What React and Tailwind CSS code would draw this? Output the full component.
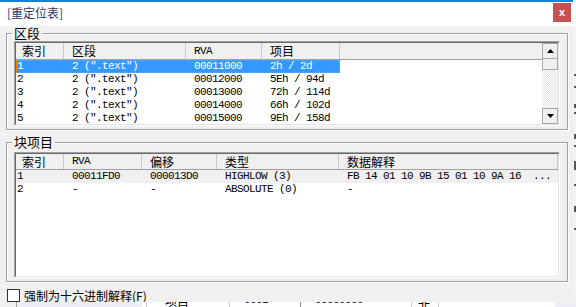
import React from "react";

const cjk = "font-['Noto_Sans_CJK_SC',sans-serif]";
const mono = "font-['Liberation_Mono',monospace] text-[11px] tracking-[-0.6px]";

const sections = [
  ["1", '2 (".text")', "00011000", "2h / 2d"],
  ["2", '2 (".text")', "00012000", "5Eh / 94d"],
  ["3", '2 (".text")', "00013000", "72h / 114d"],
  ["4", '2 (".text")', "00014000", "66h / 102d"],
  ["5", '2 (".text")', "00015000", "9Eh / 158d"],
];

const blocks = [
  ["1", "00011FD0", "000013D0", "HIGHLOW (3)", "FB 14 01 10 9B 15 01 10 9A 16  ..."],
  ["2", "-", "-", "ABSOLUTE (0)", "-"],
];

const secCols = ["w-[48px]", "w-[122px]", "w-[76px]", "w-[78px]"];
const blkCols = ["w-[48px]", "w-[78px]", "w-[75px]", "w-[122px]", "flex-1"];

// classic sunken listview frame
const Sunken = ({ className, children }) => (
  <div className={`border border-t-[#a0a0a0] border-l-[#a0a0a0] border-r-white border-b-white ${className}`}>
    <div className="h-full flex overflow-hidden bg-white border border-t-[#696969] border-l-[#696969] border-r-[#e3e3e3] border-b-[#e3e3e3]">
      {children}
    </div>
  </div>
);

const Head = ({ w, first, isMono, children }) => (
  <div
    className={`${w} shrink-0 h-full flex items-center border-r border-r-[#c8c8c8] whitespace-nowrap ${
      first ? "pl-[6px]" : "pl-[8px]"
    } ${isMono ? mono : `${cjk} text-[12px]`}`}
  >
    {children}
  </div>
);

const Cell = ({ w, first, children }) => (
  <div className={`${w} shrink-0 whitespace-pre overflow-hidden ${first ? "pl-[1px]" : "pl-[8px]"}`}>{children}</div>
);

const Group = ({ label, className, children }) => (
  <fieldset
    className={`w-[562px] border border-[#a0a0a0] px-[7px] shadow-[inset_1px_1px_0_#fff,1px_1px_0_#fff] ${className}`}
  >
    <legend className={`-ml-[2px] px-[2px] bg-[#f0f0f0] text-[13px] leading-[14px] ${cjk}`}>{label}</legend>
    {children}
  </fieldset>
);

const Arrow = ({ down }) => (
  <svg width="7" height="4" viewBox="0 0 7 4">
    <polygon points={down ? "0,0 7,0 3.5,4" : "0,4 7,4 3.5,0"} fill="#000" />
  </svg>
);

const marks = [
  ["mt-[48px]", "h-[2px]"],
  ["mt-[10px]", "h-[2px]"],
  ["mt-[16px]", "h-[4px]"],
  ["mt-[4px]", "h-[2px]"],
  ["mt-[20px]", "h-[5px]"],
  ["mt-[6px]", "h-[2px]"],
  ["mt-[14px]", "h-[9px]"],
  ["mt-[14px]", "h-[2px]"],
  ["mt-[20px]", "h-[6px]"],
  ["mt-[16px]", "h-[2px]"],
];

export default function App() {
  return (
    <div className="w-[576px] h-[307px] overflow-hidden bg-white flex flex-col text-black">
      <div className="flex h-[302px] shrink-0">
        <div className="w-[573px] flex flex-col bg-[#f0f0f0]">
          {/* title bar */}
          <div className="h-[26px] shrink-0 bg-white border-t-2 border-[#1783d6] flex items-start justify-between">
            <div className={`pl-[7px] pt-[3px] text-[12px] leading-[16px] text-[#1f3766] ${cjk}`}>[重定位表]</div>
            <div className="mt-[1px] mr-[2px] w-[18px] h-[19px] bg-[#c75050] text-white flex items-center justify-center text-[11px] font-bold font-['Liberation_Sans',sans-serif]">
              x
            </div>
          </div>

          <div className="flex-1 flex flex-col pl-[6px]">
            <Group label="区段" className="pt-[1px] pb-[3px]">
              <Sunken className="h-[85px]">
                <div className="flex-1 flex flex-col min-w-0">
                  <div className="h-[17px] shrink-0 flex bg-[#f0f0f0] border-b border-[#a0a0a0]">
                    <Head w={secCols[0]} first>索引</Head>
                    <Head w={secCols[1]}>区段</Head>
                    <Head w={secCols[2]} isMono>RVA</Head>
                    <Head w={secCols[3]}>项目</Head>
                    <div className="flex-1" />
                  </div>
                  {sections.map((r, i) => (
                    <div key={i} className={`h-[13px] leading-[13px] shrink-0 flex ${mono}`}>
                      <div
                        className={`flex ${
                          i === 0 ? "bg-[#3399ff] text-white outline-1 outline-dotted outline-[#e8902c] -outline-offset-1" : ""
                        }`}
                      >
                        {r.map((c, j) => (
                          <Cell key={j} w={secCols[j]} first={j === 0}>
                            {c}
                          </Cell>
                        ))}
                      </div>
                    </div>
                  ))}
                </div>
                {/* scrollbar */}
                <div className="w-[16px] shrink-0 flex flex-col">
                  <div className="h-[16px] shrink-0 border border-[#a8a8a8] bg-[#f0f0f0] flex items-center justify-center">
                    <Arrow />
                  </div>
                  <div className="h-[11px] shrink-0 border border-t-0 border-[#a8a8a8] bg-[#f0f0f0]" />
                  <div className="flex-1 bg-[repeating-conic-gradient(#e6e6e6_0_25%,#fff_0_50%)] bg-[length:2px_2px]" />
                  <div className="h-[16px] shrink-0 border border-[#a8a8a8] bg-[#f0f0f0] flex items-center justify-center">
                    <Arrow down />
                  </div>
                </div>
              </Sunken>
            </Group>

            <Group label="块项目" className="mt-[5px] pt-[3px] pb-[3px]">
              <Sunken className="h-[126px]">
                <div className="flex-1 flex flex-col min-w-0">
                  <div className="h-[16px] shrink-0 flex bg-[#f0f0f0] border-b border-[#a0a0a0]">
                    <Head w={blkCols[0]} first>索引</Head>
                    <Head w={blkCols[1]} isMono>RVA</Head>
                    <Head w={blkCols[2]}>偏移</Head>
                    <Head w={blkCols[3]}>类型</Head>
                    <Head w={blkCols[4]}>数据解释</Head>
                  </div>
                  {blocks.map((r, i) => (
                    <div
                      key={i}
                      className={`h-[13px] leading-[13px] shrink-0 flex ${mono} ${i === 0 ? "bg-[#f0f0f0]" : ""}`}
                    >
                      {r.map((c, j) => (
                        <Cell key={j} w={blkCols[j]} first={j === 0}>
                          {c}
                        </Cell>
                      ))}
                    </div>
                  ))}
                </div>
              </Sunken>
            </Group>

            <label className={`mt-[7px] flex items-center gap-[4px] h-[13px] pl-[1px] text-[12px] leading-[13px] ${cjk}`}>
              <span className="w-[13px] h-[13px] border border-[#333] bg-white shrink-0" />
              <span>
                强制为十六进制解释(<span className="underline">F</span>)
              </span>
            </label>
          </div>
        </div>

        {/* window behind, right edge */}
        <div className="w-[3px] flex flex-col bg-[#f3f3f3]">
          <div className="h-[26px] bg-white shrink-0" />
          {marks.map(([m, h], i) => (
            <div key={i} className={`${m} ${h} w-[2px] ml-[1px] bg-[#555] shrink-0`} />
          ))}
        </div>
      </div>

      {/* window behind, bottom edge */}
      <div className="h-[5px] flex overflow-hidden bg-white">
        <div className="w-[16px] bg-[#f0f0f0]" />
        <div className="w-[1px] bg-[#a0a0a0]" />
        <div className="w-[125px] bg-[#edeef8]" />
        <div className="w-[1px] bg-[#c8c8c8] ml-[4px]" />
        <div className={`ml-[18px] w-[60px] -mt-[7px] text-[12px] leading-[12px] ${cjk}`}>项目</div>
        <div className="w-[1px] bg-[#c8c8c8] ml-[4px]" />
        <div className={`ml-[14px] w-[40px] -mt-[8px] leading-[12px] ${mono}`}>0001</div>
        <div className="w-[1px] bg-[#888] ml-[16px]" />
        <div className={`ml-[14px] w-[60px] -mt-[8px] leading-[12px] ${mono}`}>00000000</div>
        <div className="w-[1px] bg-[#c8c8c8] ml-[36px]" />
        <div className={`ml-[6px] w-[20px] -mt-[7px] text-[12px] leading-[12px] ${cjk}`}>非</div>
        <div className="w-[1px] bg-[#c8c8c8]" />
        <div className="flex-1" />
        <div className="w-[21px] bg-[#edeef8]" />
      </div>
    </div>
  );
}
